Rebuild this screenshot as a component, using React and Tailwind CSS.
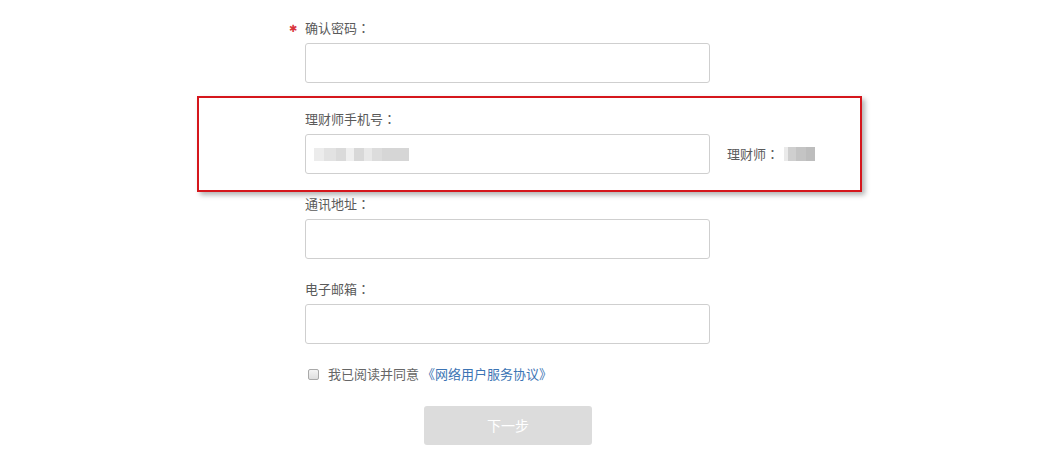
export default function App() {
  const font = { fontFamily: '"Noto Sans CJK SC", "Noto Sans", sans-serif' };
  const inputCls = "block w-[405px] h-[40px] mt-[5px] rounded-[3px] border border-[#cfcfcf] bg-white";
  const Colon = () => (
    <span style={{ fontFamily: '"Noto Sans CJK JP", sans-serif' }}>：</span>
  );
  return (
    <div className="w-[1043px] h-[462px] bg-white overflow-hidden text-[13px] text-[#5a5a5a]" style={font}>
      <div className="ml-[305px] pt-[18px] w-[405px]">
        {/* 确认密码 */}
        <div>
          <div className="relative h-5 leading-5">
            <span
              className="absolute left-[-16px] top-[1px] h-5 flex items-center text-[#d9363e] text-[10px]"
              style={{ fontFamily: '"DejaVu Sans", sans-serif' }}
            >
              ✱
            </span>
            确认密码<Colon />
          </div>
          <div className={inputCls}></div>
        </div>

        {/* 理财师手机号 */}
        <div className="relative mt-[26px]">
          <div className="absolute left-[-108px] top-[-13px] w-[665px] h-[96px] border-2 border-[#d5161c] shadow-[3px_3px_5px_rgba(0,0,0,0.3)] pointer-events-none"></div>
          <div className="h-5 leading-5">理财师手机号<Colon /></div>
          <div className="flex items-center">
            <div className={inputCls + " shrink-0 flex items-center pl-[8px]"}>
              <div className="flex h-[13px]">
                <div className="w-[10px] bg-[#ececec]"></div>
                <div className="w-[12px] bg-[#e2e2e2]"></div>
                <div className="w-[10px] bg-[#dadada]"></div>
                <div className="w-[8px] bg-[#efefef]"></div>
                <div className="w-[10px] bg-[#d8d8d8]"></div>
                <div className="w-[8px] bg-[#e8e8e8]"></div>
                <div className="w-[10px] bg-[#dcdcdc]"></div>
                <div className="w-[27px] bg-[#d6d6d6]"></div>
              </div>
            </div>
            <div className="ml-[17px] mt-[5px] flex items-center whitespace-nowrap">
              <span>理财师<Colon /></span>
              <div className="flex h-[14px] ml-[5px]">
                <div className="w-[4px] bg-[#eaeaea]"></div>
                <div className="w-[8px] bg-[#cfcfcf]"></div>
                <div className="w-[10px] bg-[#c4c4c4]"></div>
                <div className="w-[9px] bg-[#bdbdbd]"></div>
              </div>
            </div>
          </div>
        </div>

        {/* 通讯地址 */}
        <div className="mt-5">
          <div className="h-5 leading-5">通讯地址<Colon /></div>
          <div className={inputCls}></div>
        </div>

        {/* 电子邮箱 */}
        <div className="mt-5">
          <div className="h-5 leading-5">电子邮箱<Colon /></div>
          <div className={inputCls}></div>
        </div>

        {/* 协议 */}
        <div className="mt-5 h-5 flex items-center">
          <span className="ml-[3px] w-[11px] h-[11px] rounded-[2px] border border-[#a9a9a9] bg-gradient-to-b from-[#f4f4f4] to-[#dedede]"></span>
          <span className="ml-[9px] leading-5 text-[#666]">我已阅读并同意</span>
          <span className="ml-[3px] leading-5 text-[#3c74b4]">《网络用户服务协议》</span>
        </div>

        {/* 下一步 */}
        <button className="block ml-[119px] mt-[22px] w-[168px] h-[39px] rounded-[3px] bg-[#dcdcdc] text-white text-[14px] leading-[39px]" style={font}>
          下一步
        </button>
      </div>
    </div>
  );
}
